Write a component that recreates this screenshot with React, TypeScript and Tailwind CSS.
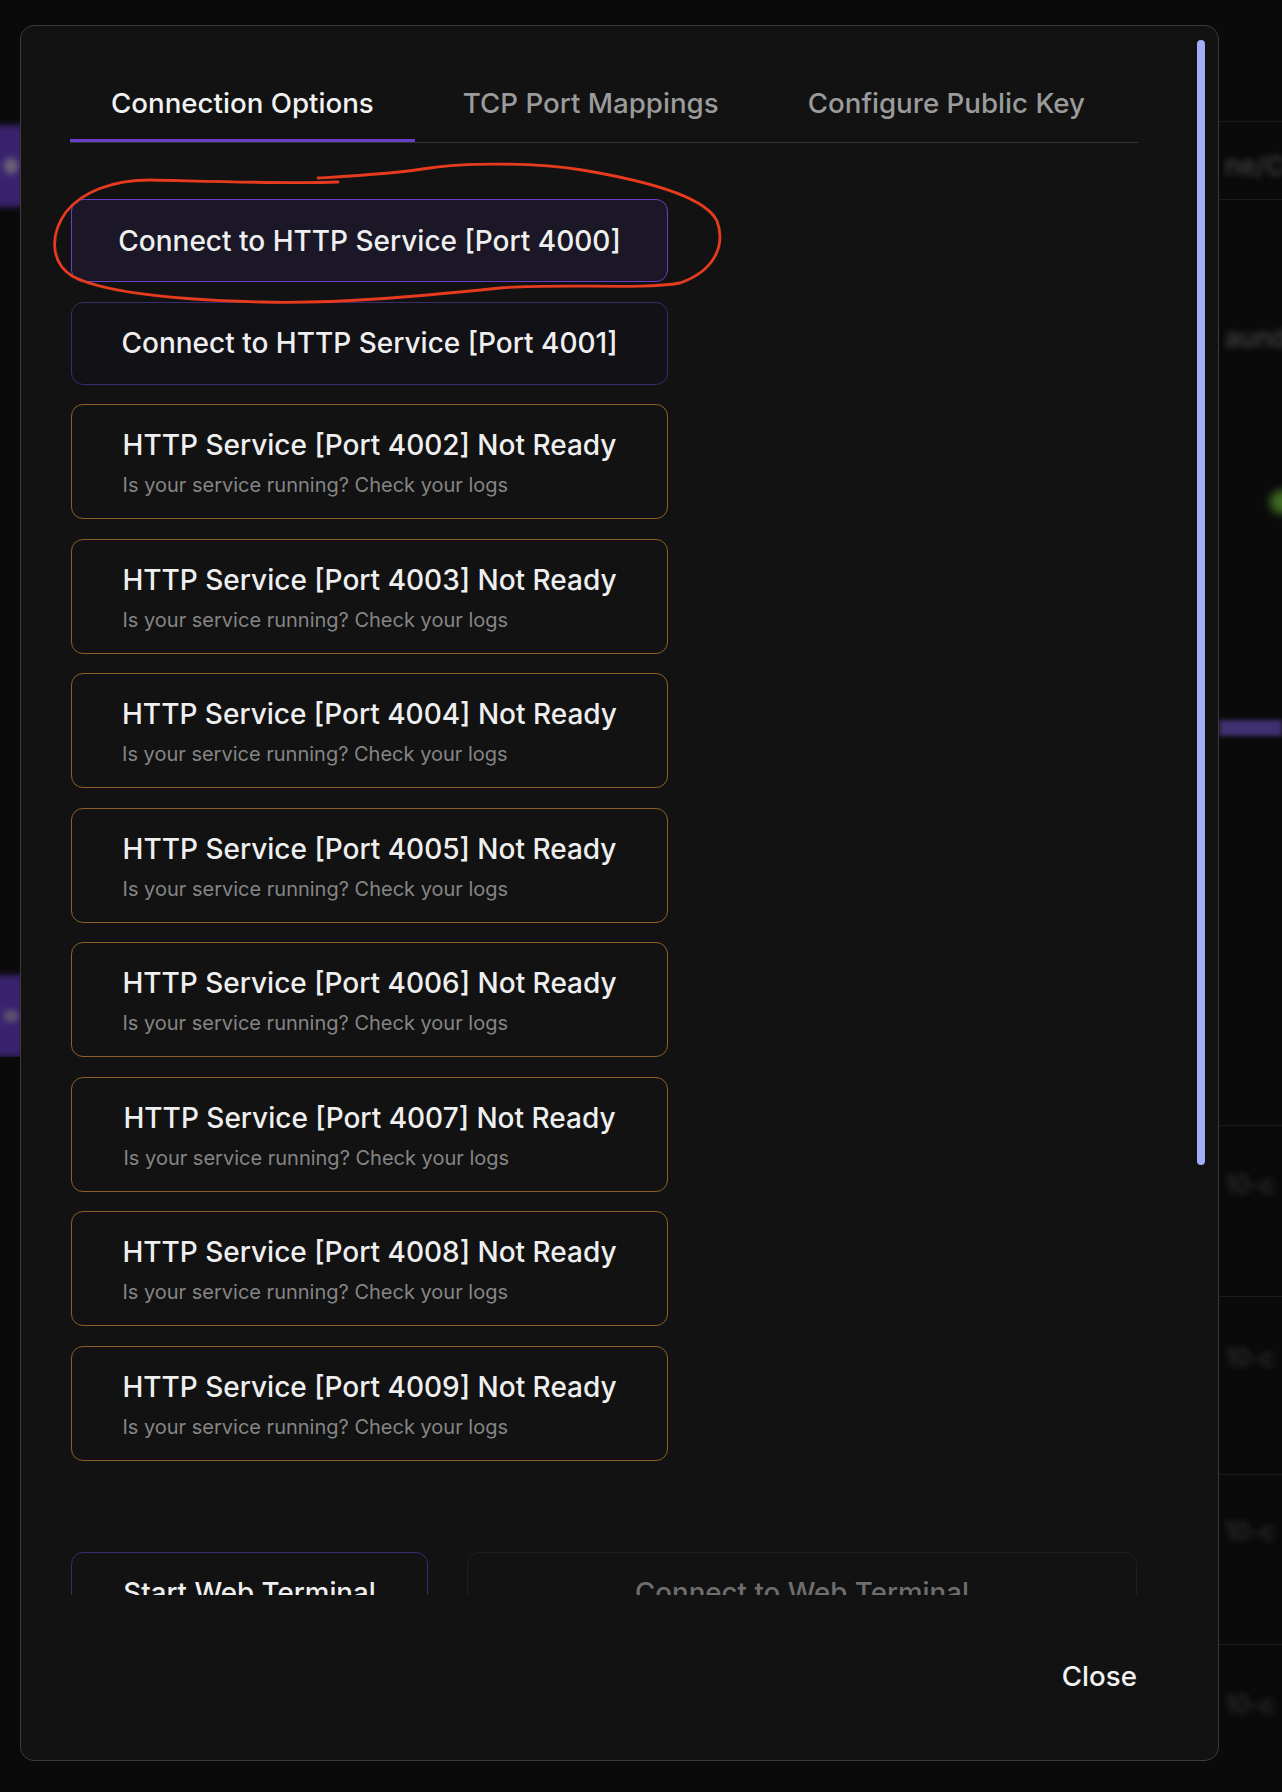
import React from "react";

const notReady = [4002, 4003, 4004, 4005, 4006, 4007, 4008, 4009];

function LeftStrip() {
  return (
    <div className="flex w-[20px] shrink-0 flex-col overflow-hidden pt-[125px]">
      <div className="ml-[-20px] flex h-[82px] w-[44px] items-center justify-end bg-[#39236e] pr-[6px] blur-[3px]">
        <div className="h-[16px] w-[14px] rounded-full bg-[#6c6478]" />
      </div>
      <div className="ml-[-20px] mt-[768px] flex h-[82px] w-[44px] items-center justify-end bg-[#39236e] pr-[6px] blur-[3px]">
        <div className="h-[12px] w-[14px] rounded-full bg-[#5f5772]" />
      </div>
    </div>
  );
}

function RightStrip() {
  const text = "pl-[6px] text-[26px] font-medium leading-[28px] text-[#454545] blur-[3px] whitespace-nowrap";
  const dim = "pl-[6px] text-[24px] leading-[28px] text-[#393939] blur-[3px] whitespace-nowrap";
  const line = "h-px bg-[#1a1a1a]";
  return (
    <div className="flex w-[63px] shrink-0 flex-col overflow-hidden pt-[121px]">
      <div className={line} />
      <div className={`mt-[30px] ${text}`}>ne/CO</div>
      <div className={`mt-[19px] ${line}`} />
      <div className={`mt-[124px] ${text}`}>aund</div>
      <div className="mr-[-12px] mt-[138px] h-[24px] w-[24px] self-end rounded-full bg-[#3f6a22] blur-[4px]" />
      <div className="mt-[206px] h-[16px] bg-[#40306f] blur-[2px]" />
      <div className={`mt-[389px] ${line}`} />
      <div className={`mt-[45px] ${dim}`}>10-c</div>
      <div className={`mt-[97px] ${line}`} />
      <div className={`mt-[47px] ${dim}`}>10-c</div>
      <div className={`mt-[102px] ${line}`} />
      <div className={`mt-[43px] ${dim}`}>10-c</div>
      <div className={`mt-[98px] ${line}`} />
      <div className={`mt-[46px] ${dim}`}>10-c</div>
    </div>
  );
}

function Annotation() {
  return (
    <svg
      className="pointer-events-none absolute left-0 top-0"
      width="1282"
      height="1792"
      viewBox="0 0 1282 1792"
      fill="none"
    >
      <path
        d="M338 182 C 280 184, 200 181, 150 180 C 112 180, 82 192, 66 212 C 50 234, 50 262, 72 276 C 104 293, 180 300, 262 302 C 340 304, 420 296, 500 288 C 562 283, 640 290, 680 283 C 714 271, 726 246, 717 221 C 705 196, 642 180, 582 170 C 532 162, 462 163, 430 168 C 392 174, 352 176, 318 178"
        stroke="#e63b1f"
        strokeWidth="2.8"
        strokeLinecap="round"
      />
    </svg>
  );
}

function NotReadyCard({ port }: { port: number }) {
  return (
    <div className="flex h-[115px] flex-col items-center rounded-[12px] border border-[#8d6228] pt-[22px]">
      <div className="text-left">
        <div className="text-[28px] font-medium leading-[36px] text-[#efefef]">
          HTTP Service [Port {port}] Not Ready
        </div>
        <div className="mt-[8px] text-[20px] leading-[28px] text-[#858585]">
          Is your service running? Check your logs
        </div>
      </div>
    </div>
  );
}

function Dialog() {
  return (
    <div className="mt-[25px] flex h-[1736px] w-[1199px] shrink-0 flex-col rounded-[14px] border border-[#3b3b3b] bg-[#121212]">
      <div className="flex h-[1569px] overflow-hidden pl-[49px] pt-[14px]">
        <div className="w-[1068px] shrink-0 pt-[26px]">
          <div className="flex gap-[7px] border-b border-[#343434]">
            <div className="relative flex h-[76px] items-center px-[41px] text-[27.7px] font-medium text-[#f2f2f2]">
              Connection Options
              <div className="absolute bottom-0 left-0 right-0 h-[3px] bg-[#6a3fc8]" />
            </div>
            <div className="flex h-[76px] items-center px-[41px] text-[27.7px] font-medium text-[#9b9b9b]">
              TCP Port Mappings
            </div>
            <div className="flex h-[76px] items-center px-[41px] text-[27.7px] font-medium text-[#9b9b9b]">
              Configure Public Key
            </div>
          </div>

          <div className="ml-px mt-[56px] flex w-[597px] flex-col gap-[19.5px]">
            <div className="flex h-[83px] items-center justify-center rounded-[12px] border border-[#6a3fc8] bg-[#1b1726] text-[28px] font-medium text-[#efefef]">
              Connect to HTTP Service [Port 4000]
            </div>
            <div className="flex h-[83px] items-center justify-center rounded-[12px] border border-[#3c2a6e] bg-[#121116] text-[28px] font-medium text-[#efefef]">
              Connect to HTTP Service [Port 4001]
            </div>
            {notReady.map((p) => (
              <NotReadyCard key={p} port={p} />
            ))}
          </div>

          <div className="ml-px mt-[91px] flex gap-[39px]">
            <div className="flex h-[83px] w-[357px] items-center justify-center rounded-[12px] border border-[#3c2a6e] text-[27.7px] font-medium text-[#efefef]">
              Start Web Terminal
            </div>
            <div className="flex h-[83px] w-[670px] items-center justify-center rounded-[12px] border border-[#1f1f1f] text-[27.7px] font-medium text-[#6e6e6e]">
              Connect to Web Terminal
            </div>
          </div>
        </div>
        <div className="ml-[59px] h-[1125px] w-[8px] shrink-0 rounded-full bg-[#a3acf7]" />
      </div>
      <div className="flex justify-end pr-[81px] pt-[64px]">
        <div className="text-[27.7px] font-medium leading-[34px] text-[#f2f2f2]">Close</div>
      </div>
    </div>
  );
}

export default function App() {
  return (
    <div className="relative flex h-[1792px] w-[1282px] items-start overflow-hidden bg-[#0a0a0a] font-['Inter',sans-serif]">
      <LeftStrip />
      <Dialog />
      <RightStrip />
      <Annotation />
    </div>
  );
}
